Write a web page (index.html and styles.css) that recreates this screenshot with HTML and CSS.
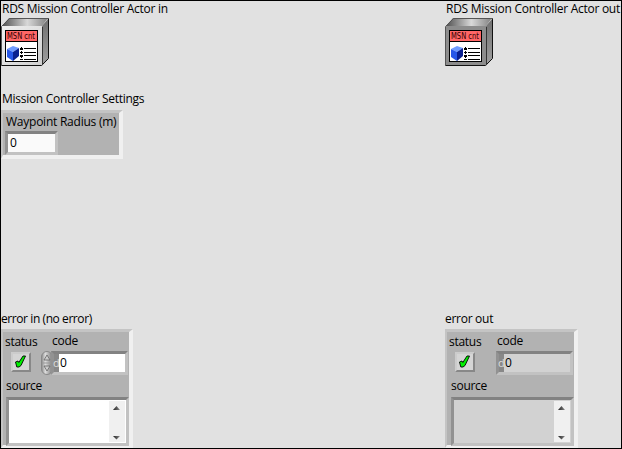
FILE: index.html
```
<!DOCTYPE html>
<html lang="en">
<head>
<meta charset="utf-8">
<title>RDS Mission Controller</title>
<link rel="stylesheet" href="styles.css">
</head>
<body>
<svg width="0" height="0" class="defs">
  <defs>
    <linearGradient id="lightFront" x2="1" y2="1"><stop offset="0" stop-color="#f0f0f0"/><stop offset="1" stop-color="#d0d0d0"/></linearGradient>
    <linearGradient id="top" x2="1"><stop offset="0" stop-color="#505050"/><stop offset=".55" stop-color="#d8d8d8"/><stop offset="1" stop-color="#808080"/></linearGradient>
    <linearGradient id="side" x2="0" y2="1"><stop offset="0" stop-color="#707070"/><stop offset="1" stop-color="#a0a0a0"/></linearGradient>
    <linearGradient id="knob" x2="1"><stop offset="0" stop-color="#888"/><stop offset=".35" stop-color="#ddd"/><stop offset="1" stop-color="#777"/></linearGradient>
    <linearGradient id="arrow" x2="1"><stop offset="0" stop-color="#222"/><stop offset="1" stop-color="#888"/></linearGradient>
    <g id="picture">
      <rect x="4" y="12" width="33" height="32" fill="#000"/>
      <rect x="5" y="13" width="31" height="30" fill="#fff"/>
      <rect x="5" y="13" width="31" height="10" fill="#ff6666"/><rect x="5" y="23" width="31" height="1" fill="#000"/>
      <text x="6" y="21" class="glyph" textLength="28" lengthAdjust="spacingAndGlyphs">MSN cnt</text>
      <path d="M6 31l6-3 6 2-6 4z" fill="#6f9bff"/><path d="M6 31l6 3v9l-6-4z" fill="#2858e8"/><path d="M12 34l6-4v8l-6 5z" fill="#0a2090"/>
      <path d="M20.5 29v13" stroke="#000" stroke-dasharray="1 1"/>
      <path d="M19 30h3v2h-3zM19 34h3v1h-3zM19 37h3v2h-3zM19 41h3v1h-3z" fill="#000"/>
      <path d="M23 30.5h12M23 34.5h12M23 37.5h12M23 41.5h12" stroke="#000"/>
    </g>
    <g id="shell">
      <path d="M8 0h39l-6 8H1z" fill="url(#top)"/>
      <path d="M47 1v40l-6 7V8z" fill="url(#side)"/>
      <path d="M.5 47.5V8.5l8-8h39" fill="none" stroke="#555"/>
      <path d="M47.5.5v40l-7 7H.5" fill="none" stroke="#111"/>
      <path d="M41.5 9v38" stroke="#333"/>
    </g>
    <path id="tick" d="M1.5 7l2.5-1 .8 1.5L9 1h2.5L7 10.5l-2 1.5H2.8z" fill="#00f000" stroke="#000" stroke-width=".9"/>
    <g id="arrows" fill="url(#arrow)"><path d="M4 10L7.5 6 11 10z"/><path d="M4 36h7l-3.5 3.5z"/></g>
  </defs>
</svg>
<main class="panel">
  <section class="column">
    <div class="label actor actor-in">RDS Mission Controller Actor in</div>
    <svg class="object" width="48" height="48"><rect x="1" y="8" width="40" height="39" fill="url(#lightFront)"/><use href="#shell"/><use href="#picture"/></svg>
    <div class="label settings-label">Mission Controller Settings</div>
    <div class="cluster settings">
      <div class="label radius">Waypoint Radius (m)</div>
      <div class="field number">0</div>
    </div>
    <div class="label error-label error-in">error in (no error)</div>
    <div class="cluster error">
      <div class="row">
        <div class="status"><div class="label">status</div><div class="led"><svg width="13" height="13"><use href="#tick"/></svg></div></div>
        <div class="code"><div class="label">code</div><div class="spin">
          <svg class="knob" width="12" height="24"><rect x=".5" y=".5" width="11" height="23" rx="5.5" fill="url(#knob)" stroke="#888"/><path d="M3 9l3-5 3 5zM3 15l3 5 3-5z" fill="#ccc" stroke="#666" stroke-width=".8"/><path d="M1 12h10" stroke="#999"/></svg>
          <div class="field code-field"><span class="radix">d</span>0</div></div></div>
      </div>
      <div class="label source-label">source</div>
      <div class="field source"><svg class="scroll" width="16" height="41"><use href="#arrows" y="-1"/></svg></div>
    </div>
  </section>
  <section class="column indicator">
    <div class="label actor actor-out">RDS Mission Controller Actor out</div>
    <svg class="object" width="48" height="48"><rect x="1" y="8" width="40" height="39" fill="#8c8c8c"/><use href="#shell"/><use href="#picture"/></svg>
    <div class="label error-label error-out">error out</div>
    <div class="cluster error">
      <div class="row">
        <div class="status"><div class="label">status</div><div class="led"><svg width="13" height="13"><use href="#tick"/></svg></div></div>
        <div class="code"><div class="label">code</div><div class="spin">
          <div class="field code-field"><span class="radix">d</span>0</div></div></div>
      </div>
      <div class="label source-label">source</div>
      <div class="field source"><svg class="scroll" width="16" height="41"><use href="#arrows" y="-1"/></svg></div>
    </div>
  </section>
</main>
</body>
</html>
```
FILE: styles.css
```
* { box-sizing: border-box; }
body { margin: 0; font: 12px/16px "Open Sans", "Noto Sans", sans-serif; color: #000; }
.defs { position: absolute; }
svg { display: block; }
.panel { display: flex; justify-content: space-between; width: 622px; height: 449px; border: 1px solid #000; background: #e1e1e1; overflow: hidden; }
.column { display: flex; flex-direction: column; width: 176px; height: 447px; }
.label { white-space: nowrap; letter-spacing: -0.28px; height: 16px; line-height: 16px; flex: none; }
.actor { padding-left: 1px; }
.object { margin-top: 1px; }
.glyph { font: 8px "DejaVu Sans", sans-serif; fill: #300; }
.settings-label { margin-top: 25px; padding-left: 1px; }
.cluster { background: #b2b2b2; border: 4px solid; border-width: 3px 4px 3px 2px; border-color: #c4c4c4 #f0f0f0 #f0f0f0 #c4c4c4; }
.settings { width: 122px; height: 49px; margin-top: 3px; padding: 1px 0 0 1px; border-bottom-width: 4px; }
.settings .label { padding-left: 2px; letter-spacing: -0.24px; }
.field { border: 3px solid; border-color: #828282 #c2c2c2 #c2c2c2 #929292; background: #fff; }
.number { width: 53px; height: 24px; margin-top: 1px; margin-left: 1px; padding: 1px 0 0 2px; background: #fafafa; }
.error-label { margin-top: auto; }
.error-in { letter-spacing: -0.42px; }
.cluster.error { width: 132px; height: 119px; margin-top: 2px; padding-left: 2px; }
.row { display: flex; height: 45px; }
.status { width: 35px; padding-top: 2px; }
.led { width: 20px; height: 20px; margin: 2px 0 0 6px; padding: 1px; border: 2px solid; border-color: #ccc #888 #888 #ccc; background: #d5d5d5; }
.code { width: 88px; padding-top: 1px; }
.code .label { padding-left: 12px; }
.spin { display: flex; justify-content: flex-end; align-items: center; height: 24px; margin-top: 2px; }
.knob { margin-right: -2px; }
.code-field { display: flex; width: 77px; height: 24px; padding: 0; line-height: 18px; }
.radix { width: 5px; margin-right: 1px; background: #888; color: #ddd; font-size: 11px; text-indent: -1px; }
.source-label { padding-left: 1px; margin-top: 1px; }
.source { display: flex; justify-content: flex-end; width: 123px; height: 49px; margin-top: 3px; margin-left: 1px; padding: 1px; }
.scroll { background: #f0f0f0; }
.indicator .field { background: #d2d2d2; }
.indicator .cluster.error { width: 133px; }
.indicator .status { width: 36px; }
.indicator .source-label { padding-left: 2px; }
.indicator .source { margin-left: 2px; }
```
